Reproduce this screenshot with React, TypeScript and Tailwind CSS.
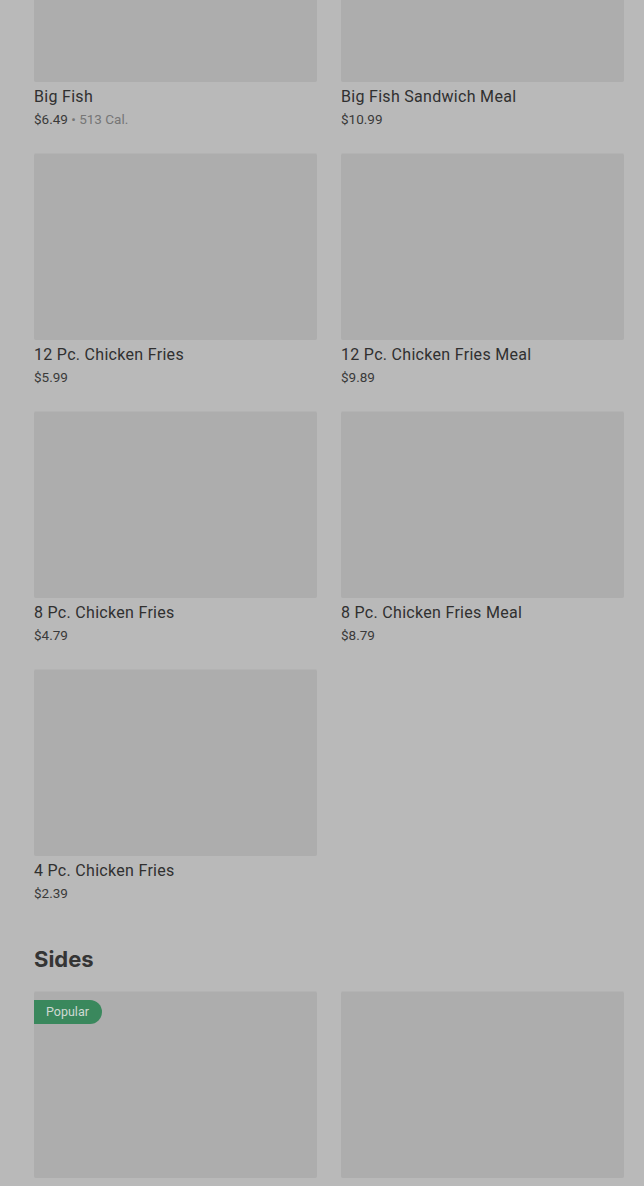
import React from 'react';

interface MenuItem {
  name: string;
  price: string;
  cal?: string;
  popular?: boolean;
}

const chicken: MenuItem[] = [
  { name: 'Big Fish', price: '$6.49', cal: '513 Cal.' },
  { name: 'Big Fish Sandwich Meal', price: '$10.99' },
  { name: '12 Pc. Chicken Fries', price: '$5.99' },
  { name: '12 Pc. Chicken Fries Meal', price: '$9.89' },
  { name: '8 Pc. Chicken Fries', price: '$4.79' },
  { name: '8 Pc. Chicken Fries Meal', price: '$8.79' },
  { name: '4 Pc. Chicken Fries', price: '$2.39' },
];

const sides: MenuItem[] = [
  { name: 'Classic Fries', price: '$3.19', popular: true },
  { name: 'Onion Rings', price: '$3.49' },
];

const Card: React.FC<{ item: MenuItem }> = ({ item }) => (
  <div className="flex flex-col">
    <div className="relative h-[187px] bg-[#adadad] border-t border-[#b3b3b3] rounded-[2px]">
      {item.popular && (
        <span className="absolute left-0 top-[8px] h-[24px] pl-[12px] pr-[13px] flex items-center rounded-r-full bg-[#3a885d] text-[12.5px] text-[#cfd9d3]">
          Popular
        </span>
      )}
    </div>
    <div className="mt-[5px] text-[16px] leading-[20px] tracking-[0.3px] text-[#303030]">{item.name}</div>
    <div className="mt-[4px] text-[13.5px] leading-[17px] text-[#3a3a3a]">
      {item.price}
      {item.cal && <span className="text-[#767676]"> • {item.cal}</span>}
    </div>
  </div>
);

export default function App() {
  return (
    <div
      className="w-[644px] h-[1186px] overflow-hidden bg-[#b9b9b9]"
      style={{ fontFamily: 'Roboto, "Liberation Sans", sans-serif' }}
    >
      <div className="pl-[34px] pr-[20px] -mt-[105px]">
        <div className="grid grid-cols-2 gap-x-[24px] gap-y-[25px]">
          {chicken.map((item) => (
            <Card key={item.name} item={item} />
          ))}
        </div>
        <h2 className="mt-[43px] mb-[18px] text-[22px] leading-[28px] font-bold text-[#353535]" style={{ fontFamily: 'Inter, Roboto, sans-serif' }}>
          Sides
        </h2>
        <div className="grid grid-cols-2 gap-x-[24px] gap-y-[25px]">
          {sides.map((item) => (
            <Card key={item.name} item={item} />
          ))}
        </div>
      </div>
    </div>
  );
}
